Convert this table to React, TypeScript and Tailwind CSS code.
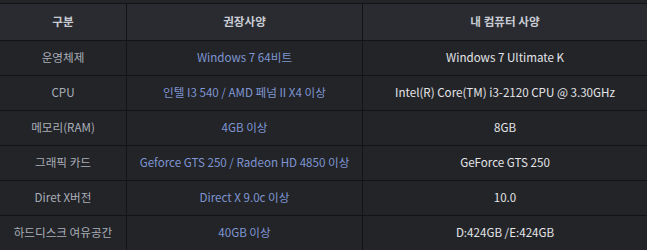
import React from 'react';

const rows = [
  ['운영체제', 'Windows 7 64비트', 'Windows 7 Ultimate K'],
  ['CPU', '인텔 I3 540 / AMD 페넘 II X4 이상', 'Intel(R) Core(TM) i3-2120 CPU @ 3.30GHz'],
  ['메모리(RAM)', '4GB 이상', '8GB'],
  ['그래픽 카드', 'Geforce GTS 250 / Radeon HD 4850 이상', 'GeForce GTS 250'],
  ['Diret X버전', 'Direct X 9.0c 이상', '10.0'],
  ['하드디스크 여유공간', '40GB 이상', 'D:424GB /E:424GB'],
];

const App = () => {
  return (
    <div
      className="w-[647px] h-[250px] overflow-hidden bg-[#232428] pt-[3px] text-[11.6px]"
      style={{ fontFamily: '"Noto Sans CJK KR", "Noto Sans", sans-serif' }}
    >
      <div className="border-t border-[#131316]">
        {/* 헤더 */}
        <div className="grid grid-cols-[127px_236px_1fr] h-[37px] bg-[#2a2b30] border-b border-[#131316] font-bold text-[#c8ccd4]">
          <div className="flex items-center justify-center border-r border-[#131316]">구분</div>
          <div className="flex items-center justify-center border-r border-[#131316]">권장사양</div>
          <div className="flex items-center justify-center">내 컴퓨터 사양</div>
        </div>
        {rows.map((r, i) => (
          <div key={i} className="grid grid-cols-[127px_236px_1fr] h-[35px] border-b border-[#131316]">
            <div className="flex items-center justify-center border-r border-[#131316] text-[#a9aeb8]">{r[0]}</div>
            <div className="flex items-center justify-center border-r border-[#131316] text-[#7f96d2]">{r[1]}</div>
            <div className="flex items-center justify-center text-[#e4e5e8]">{r[2]}</div>
          </div>
        ))}
      </div>
    </div>
  );
};

export default App;
